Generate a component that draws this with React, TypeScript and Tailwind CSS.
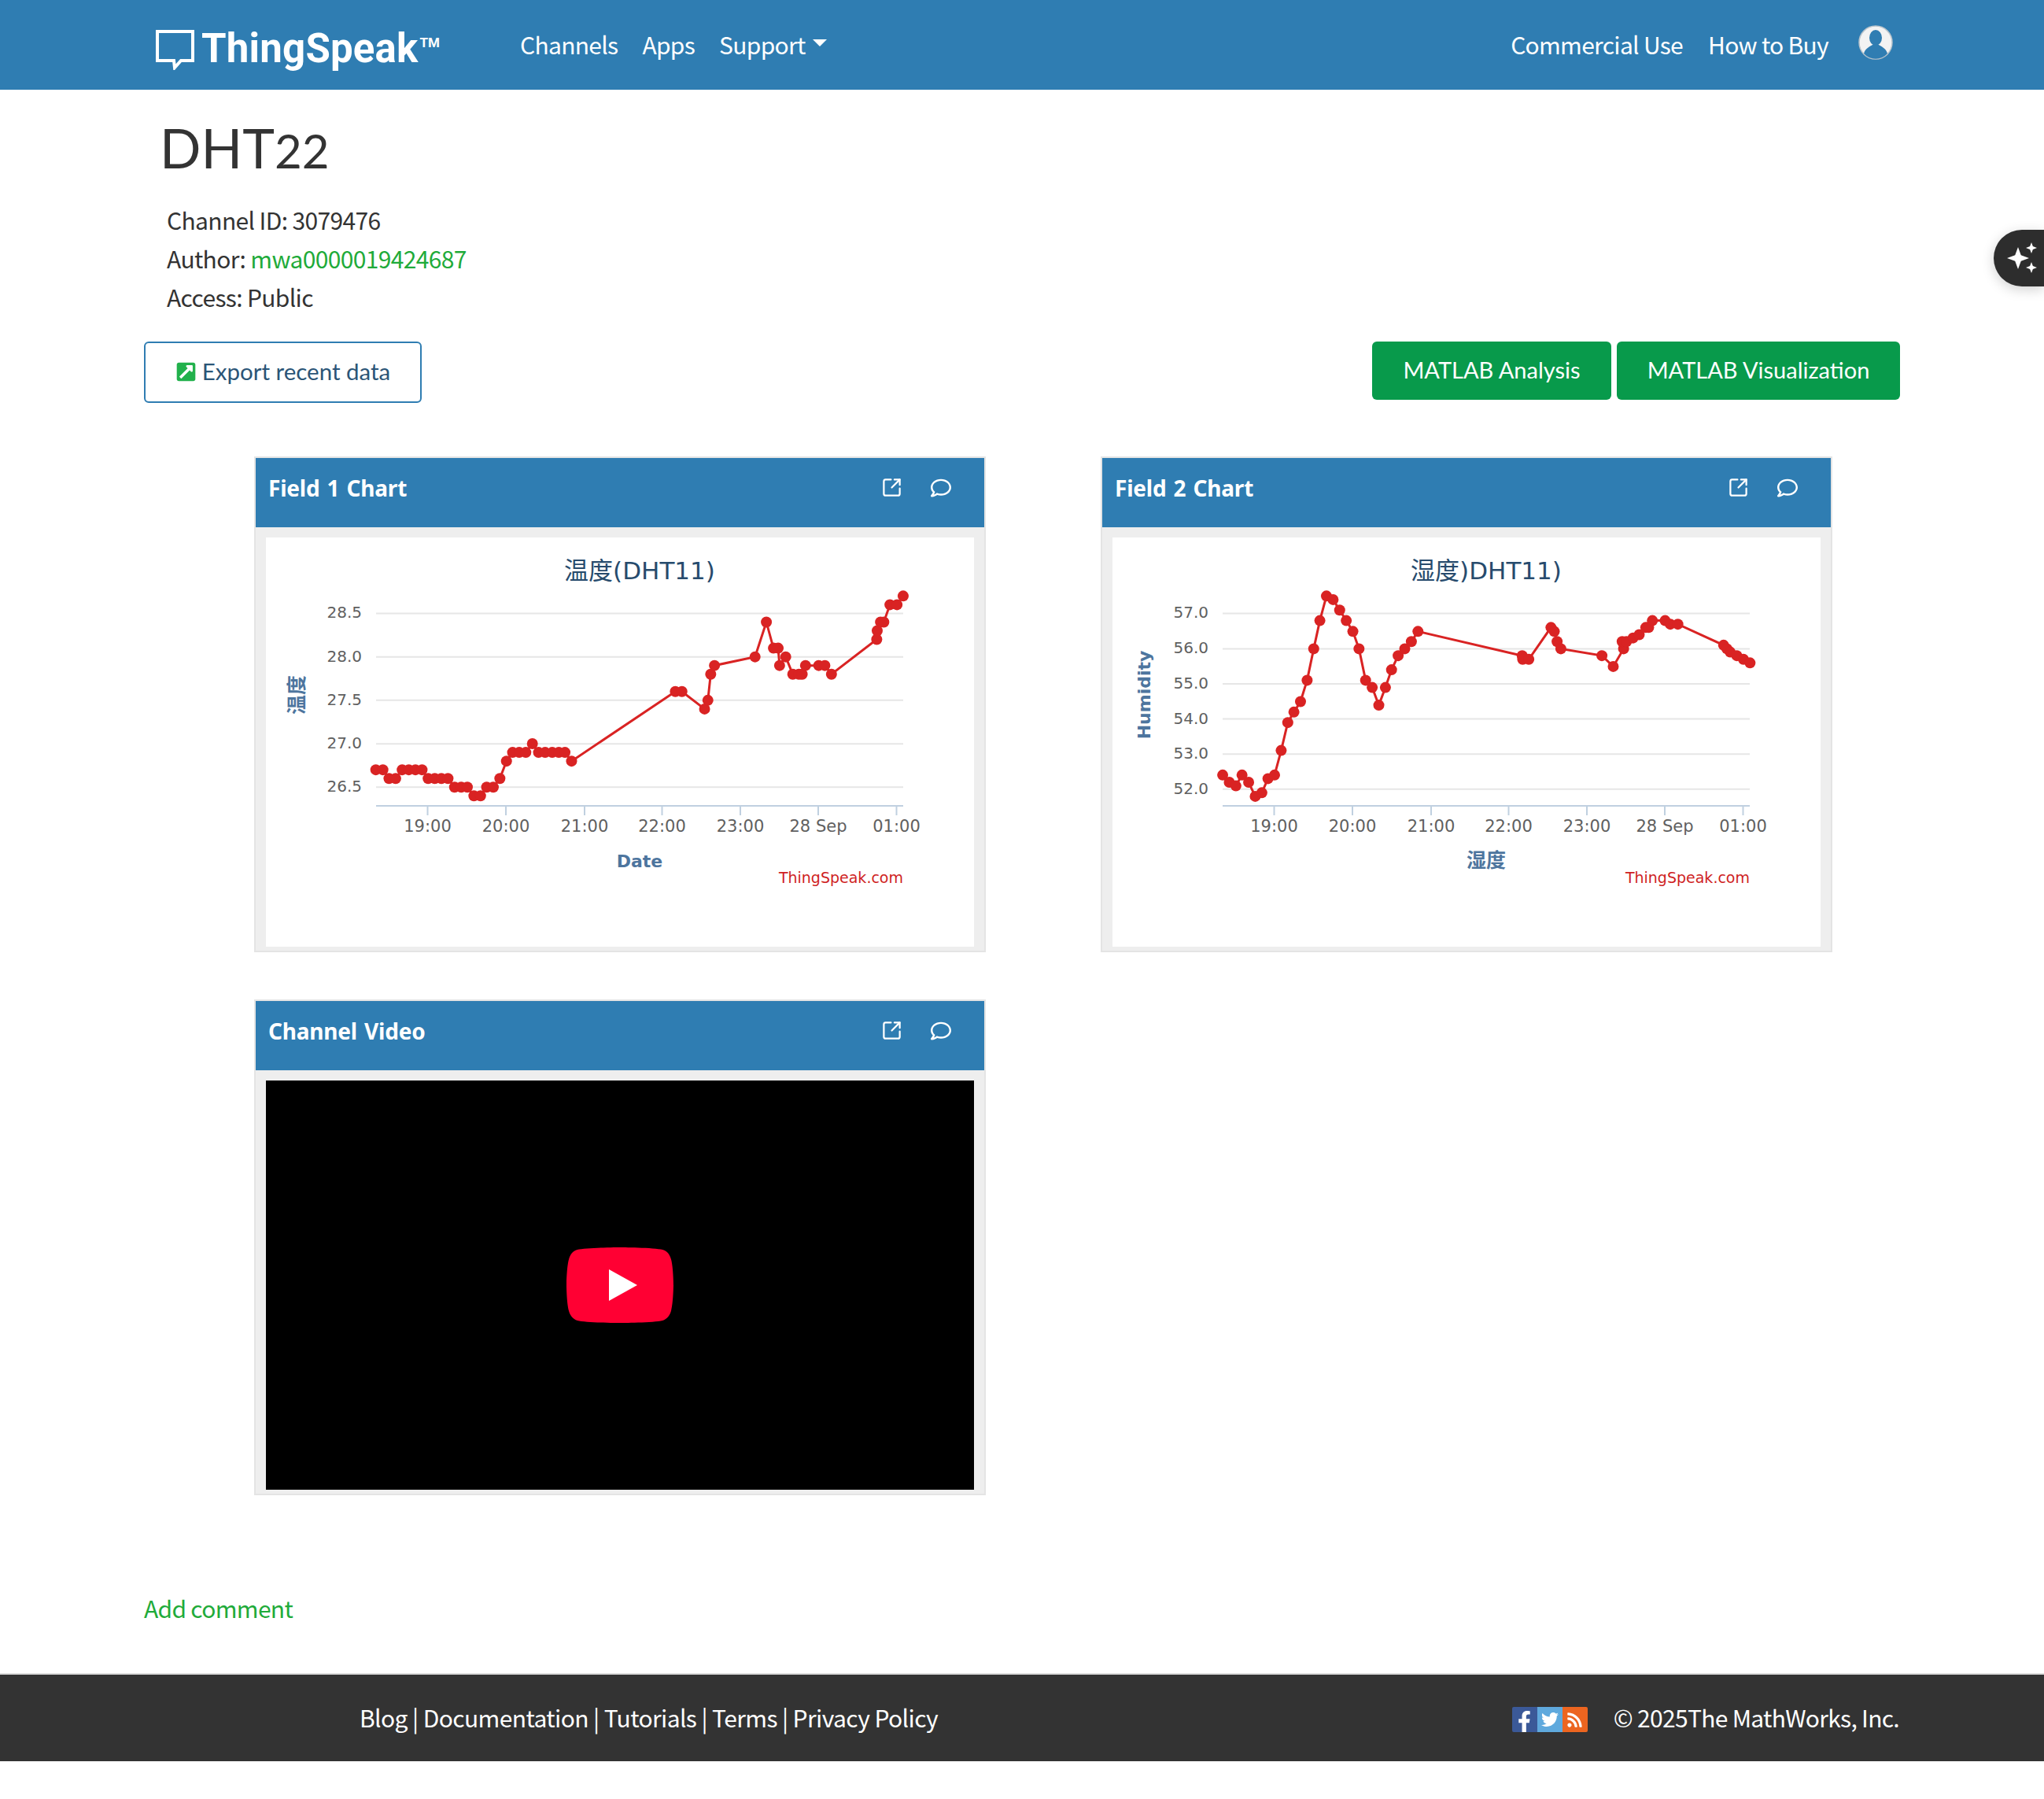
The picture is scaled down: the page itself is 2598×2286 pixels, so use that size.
import { FaExternalLinkSquareAlt, FaFacebookF, FaRegComment, FaRss, FaTwitter } from 'react-icons/fa';
import { SquareArrowOutUpRight } from 'lucide-react';

// points are [x, y] as read off the chart, scaled to the plot below
type Pt = [number, number];

const TEMP_POINTS: [number, number][] = [
  [263, 26.7], [278, 26.7], [291, 26.6], [305, 26.6], [319, 26.7], [333, 26.7], [347, 26.7], [361, 26.7],
  [374, 26.6], [388, 26.6], [402, 26.6], [416, 26.6], [430, 26.5], [444, 26.5], [457, 26.5], [471, 26.4],
  [485, 26.4], [498, 26.5], [512, 26.5], [526, 26.6], [540, 26.8], [553, 26.9], [567, 26.9], [581, 26.9],
  [595, 27.0], [608, 26.9], [622, 26.9], [637, 26.9], [651, 26.9], [664, 26.9], [678, 26.8], [898, 27.6],
  [912, 27.6], [960, 27.4], [967, 27.5], [973, 27.8], [981, 27.9], [1067, 28.0], [1091, 28.4], [1106, 28.1],
  [1116, 28.1], [1119, 27.9], [1132, 28.0], [1147, 27.8], [1160, 27.8], [1167, 27.8], [1174, 27.9], [1202, 27.9],
  [1215, 27.9], [1229, 27.8], [1325, 28.2], [1326, 28.3], [1333, 28.4], [1340, 28.4], [1353, 28.6], [1368, 28.6],
  [1381, 28.7],
];

const HUM_POINTS: Pt[] = [
  [257, 998], [271, 1020], [285, 1031], [298, 998], [312, 1020], [326, 1063], [340, 1052], [353, 1009],
  [367, 998], [381, 923], [395, 838], [408, 806], [422, 774], [436, 709], [450, 613], [463, 527],
  [477, 452], [491, 463], [505, 495], [519, 527], [533, 560], [546, 613], [560, 709], [574, 731],
  [588, 785], [602, 731], [615, 677], [629, 634], [643, 613], [657, 591], [671, 560], [892, 634],
  [893, 645], [906, 645], [953, 548], [960, 560], [966, 591], [974, 613], [1061, 634], [1085, 667],
  [1107, 613], [1104, 591], [1113, 591], [1127, 580], [1140, 570], [1154, 548], [1160, 548], [1168, 527],
  [1195, 527], [1206, 538], [1222, 538], [1319, 602], [1326, 613], [1333, 623], [1347, 634], [1361, 645],
  [1375, 656],
];

const X_TICKS = [
  { label: '19:00', x: 205.5 },
  { label: '20:00', x: 305 },
  { label: '21:00', x: 405 },
  { label: '22:00', x: 503.5 },
  { label: '23:00', x: 603 },
  { label: '28 Sep', x: 702 },
  { label: '01:00', x: 801.5 },
];

const toY = (z: number) => z / 2.4 - 114;

function Chart({ title, yLabels, yTitle, yTitleSize, xTitle, xTitleSize, points }: {
  title: string;
  yLabels: { label: string; z: number }[];
  yTitle: string;
  yTitleSize: number;
  xTitle: string;
  xTitleSize: number;
  points: Pt[];
}) {
  const line = points.map((p) => `${p[0]},${p[1]}`).join(' ');
  return (
    <svg width="900" height="522" viewBox="0 0 900 522" className="block">
      <text x="475" y="53" textAnchor="middle" fontSize="31" fill="#274b6d" fontFamily="'DejaVu Sans','Noto Sans CJK SC',sans-serif">{title}</text>
      {yLabels.map((l) => (
        <g key={l.label}>
          <line x1="140" x2="810" y1={toY(l.z)} y2={toY(l.z)} stroke="#e6e6e6" strokeWidth="2" />
          <text x="122" y={toY(l.z) + 6} textAnchor="end" fontSize="20" fill="#606060" fontFamily="'DejaVu Sans',sans-serif">{l.label}</text>
        </g>
      ))}
      <line x1="140" x2="810" y1="341" y2="341" stroke="#c0d0e0" strokeWidth="2" />
      {X_TICKS.map((t) => (
        <g key={t.label}>
          <line x1={t.x} x2={t.x} y1="341" y2="353" stroke="#c0d0e0" strokeWidth="2" />
          <text x={t.x} y="374" textAnchor="middle" fontSize="21" fill="#606060" fontFamily="'DejaVu Sans',sans-serif">{t.label}</text>
        </g>
      ))}
      <text transform="translate(48 200) rotate(-90)" textAnchor="middle" fontSize={yTitleSize} fontWeight="700" fill="#4d759e" fontFamily="'DejaVu Sans','Noto Sans CJK SC',sans-serif">{yTitle}</text>
      <text x="475" y="419" textAnchor="middle" fontSize={xTitleSize} fontWeight="700" fill="#4d759e" fontFamily="'DejaVu Sans','Noto Sans CJK SC',sans-serif">{xTitle}</text>
      <text x="810" y="439" textAnchor="end" fontSize="19" fill="#cf1f1f" fontFamily="'DejaVu Sans',sans-serif">ThingSpeak.com</text>
      <polyline points={line} fill="none" stroke="#d92323" strokeWidth="3" />
      {points.map((p, i) => (
        <circle key={i} cx={p[0]} cy={p[1]} r="7" fill="#d92323" />
      ))}
    </svg>
  );
}

function Panel({ title, children }: { title: string; children: React.ReactNode }) {
  return (
    <div className="border-2 border-[#e4e4e4] bg-[#eeeeee] h-[630px] flex flex-col">
      <div className="h-[88px] bg-[#2f7db2] flex items-start justify-between pl-[16px] pr-[42px] pt-[20px] shrink-0">
        <span className="text-[28px] leading-[36px] font-bold text-white font-['Noto_Sans',sans-serif] tracking-[-0.2px] [word-spacing:2px]">{title}</span>
        <div className="flex items-center gap-[36px] text-white pt-[4px]">
          <SquareArrowOutUpRight size={27} strokeWidth={2} />
          <FaRegComment size={26} />
        </div>
      </div>
      <div className="mt-[13px] mx-[13px] mb-[5px] bg-white flex-1 min-h-0 overflow-hidden">{children}</div>
    </div>
  );
}

function Star({ cx, cy, r }: { cx: number; cy: number; r: number }) {
  const k = r * 0.27;
  return (
    <path
      fill="white"
      d={`M${cx} ${cy - r}L${cx + k} ${cy - k}L${cx + r} ${cy}L${cx + k} ${cy + k}L${cx} ${cy + r}L${cx - k} ${cy + k}L${cx - r} ${cy}L${cx - k} ${cy - k}Z`}
    />
  );
}

export default function App() {
  const chartPts = (pts: [number, number][]): Pt[] =>
    pts.map(([x, v]) => [x / 1.668 - 18, toY(505 + (28.5 - v) * 265)]);
  const humPts: Pt[] = HUM_POINTS.map(([x, y]) => [x / 1.668 - 14, toY(y)]);

  return (
    <div className="relative min-h-[2286px] bg-white font-['Noto_Sans_CJK_SC',sans-serif] text-[#333]">
      <header className="h-[114px] bg-[#2f7db2] flex items-center justify-between pl-[198px] pr-[192px] text-white">
        <div className="flex items-center">
          <div className="flex items-center w-[463px] pt-[8px]">
            <svg width="50" height="52" viewBox="0 0 50 52" className="mt-[4px]">
              <path d="M2 3H47V40H32L24 49L23 40H2Z" fill="none" stroke="white" strokeWidth="4" />
            </svg>
            <span className="ml-[8px] text-[51px] leading-none font-bold font-['Roboto',sans-serif] tracking-[0.2px]">ThingSpeak</span>
            <span className="ml-[2px] mb-[14px] text-[17px] leading-none font-bold font-['Roboto',sans-serif]">TM</span>
          </div>
          <nav className="flex items-center gap-[31px] text-[30px] leading-none tracking-[-0.7px] mb-[2px]">
            <span>Channels</span>
            <span>Apps</span>
            <span className="flex items-center gap-[9px]">
              Support
              <span className="mb-[4px] w-0 h-0 border-x-[9px] border-x-transparent border-t-[9px] border-t-white" />
            </span>
          </nav>
        </div>
        <div className="flex items-center text-[30px] leading-none tracking-[-0.7px]">
          <span className="mb-[2px]">Commercial Use</span>
          <span className="ml-[32px] mb-[2px]">How to Buy</span>
          <svg width="44" height="44" viewBox="0 0 44 44" className="ml-[38px] mb-[6px]">
            <circle cx="22" cy="22" r="21" fill="#f3f3f3" stroke="#b9c4cc" strokeWidth="1.5" />
            <ellipse cx="22" cy="16" rx="8" ry="10" fill="#2f7db2" />
            <path d="M7 36C9 29 15 27 18 25H26C29 27 35 29 37 36A20 20 0 0 1 7 36Z" fill="#2f7db2" />
          </svg>
        </div>
      </header>

      <main className="pl-[183px] pr-[183px]">
        <h1 className="pl-[20px] pt-[40px] h-[141px] text-[69px] leading-[68px] font-normal font-['Lato',sans-serif] text-[#333]">
          DHT<span className="text-[60px]">22</span>
        </h1>
        <div className="pl-[29px] text-[30px] leading-[49px] tracking-[-0.65px]">
          <p>Channel ID: 3079476</p>
          <p>Author: <span className="text-[#1fab3a]">mwa0000019424687</span></p>
          <p>Access: Public</p>
        </div>
        <div className="mt-[32px] flex items-start justify-between">
          <button className="w-[353px] h-[78px] rounded-[6px] border-2 border-[#2f7db2] flex items-center justify-center gap-[7px] pb-[2px] text-[29.5px] text-[#2b5577] font-['Lato',sans-serif]">
            <FaExternalLinkSquareAlt size={27} className="text-[#22b14c]" />
            Export recent data
          </button>
          <div className="flex gap-[7px]">
            <button className="w-[304px] h-[74px] pb-[2px] rounded-[6px] bg-[#089a4b] text-white text-[29px] font-['Lato',sans-serif]">MATLAB Analysis</button>
            <button className="w-[360px] h-[74px] pb-[2px] rounded-[6px] bg-[#089a4b] text-white text-[29px] font-['Lato',sans-serif]">MATLAB Visualization</button>
          </div>
        </div>

        <div className="mt-[68px] ml-[140px] w-[2005px] grid grid-cols-[930px_930px] gap-x-[146px] gap-y-[60px]">
          <Panel title="Field 1 Chart">
            <Chart
              title="温度(DHT11)"
              yLabels={[
                { label: '28.5', z: 505 },
                { label: '28.0', z: 638 },
                { label: '27.5', z: 770 },
                { label: '27.0', z: 903 },
                { label: '26.5', z: 1035 },
              ]}
              yTitle="温度"
              yTitleSize={25}
              xTitle="Date"
              xTitleSize={22}
              points={chartPts(TEMP_POINTS)}
            />
          </Panel>
          <Panel title="Field 2 Chart">
            <Chart
              title="湿度)DHT11)"
              yLabels={[
                { label: '57.0', z: 505 },
                { label: '56.0', z: 613 },
                { label: '55.0', z: 720 },
                { label: '54.0', z: 827 },
                { label: '53.0', z: 934 },
                { label: '52.0', z: 1041 },
              ]}
              yTitle="Humidity"
              yTitleSize={22}
              xTitle="湿度"
              xTitleSize={25}
              points={humPts}
            />
          </Panel>
          <Panel title="Channel Video">
            <div className="h-full bg-black flex items-center justify-center">
              <svg width="136" height="96" viewBox="0 0 68 48">
                <path
                  fill="#ff0033"
                  d="M66.52,7.74c-0.78-2.93-2.49-5.41-5.42-6.19C55.79,.13,34,0,34,0S12.21,.13,6.9,1.55C3.97,2.33,2.27,4.81,1.48,7.74C0.06,13.05,0,24,0,24s0.06,10.95,1.48,16.26c0.78,2.93,2.49,5.41,5.42,6.19C12.21,47.87,34,48,34,48s21.79-0.13,27.1-1.55c2.93-0.78,4.64-3.26,5.42-6.19C67.94,34.95,68,24,68,24S67.94,13.05,66.52,7.74z"
                />
                <path fill="#fff" d="M27 14L45 24L27 34Z" />
              </svg>
            </div>
          </Panel>
        </div>

        <p className="mt-[121px] text-[30px] leading-[44px] tracking-[-0.7px] text-[#1fab3a]">Add comment</p>
      </main>

      <footer className="mt-[61px] h-[112px] bg-[#333] border-t-2 border-[#dddddd] flex items-center justify-between pl-[457px] pr-[184px] text-white text-[30px] tracking-[-0.6px]">
        <span className="mb-[2px]">Blog | Documentation | Tutorials | Terms | Privacy Policy</span>
        <div className="flex items-center">
          <div className="flex mt-[4px]">
            <span className="w-[32px] h-[32px] rounded-l-[2px] bg-[#3b5998] flex items-end justify-center overflow-hidden"><FaFacebookF size={27} /></span>
            <span className="w-[32px] h-[32px] bg-[#5fa9dd] flex items-center justify-center"><FaTwitter size={22} /></span>
            <span className="w-[32px] h-[32px] rounded-r-[2px] bg-[#ec6520] flex items-center justify-center"><FaRss size={21} /></span>
          </div>
          <span className="ml-[33px] mb-[2px] tracking-[-0.7px]">© 2025The MathWorks, Inc.</span>
        </div>
      </footer>

      <div className="absolute right-0 top-[292px] w-[64px] h-[72px] rounded-l-[36px] bg-[#2d2d2d] shadow-[0_4px_16px_rgba(0,0,0,0.18)]">
        <svg width="64" height="72" viewBox="0 0 64 72">
          <Star cx={31} cy={36} r={14} />
          <Star cx={48} cy={23} r={7} />
          <Star cx={48} cy={48} r={7} />
        </svg>
      </div>
    </div>
  );
}
